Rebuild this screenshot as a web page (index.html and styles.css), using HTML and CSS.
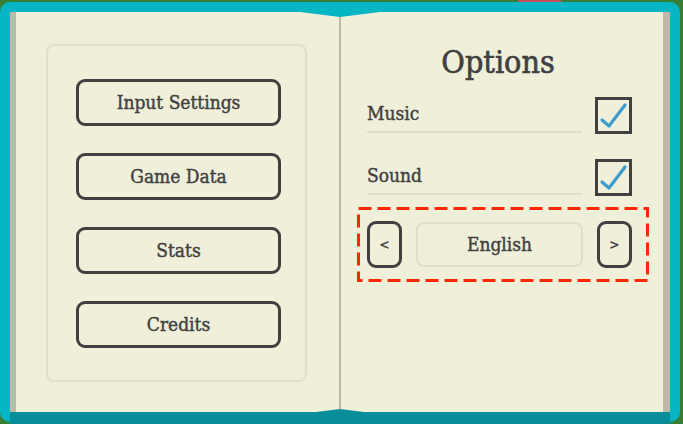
FILE: index.html
```html
<!DOCTYPE html>
<html lang="en">
<head>
    <meta charset="UTF-8">
    <title>Options</title>
    <link rel="stylesheet" href="styles.css">
</head>
<body>
    <div class="top-strip"><span class="ribbon"></span></div>
    <div class="book">
        <div class="pages">
            <!-- left page: main menu -->
            <section class="page page-left">
                <div class="menu-panel">
                    <button class="menu-btn">Input Settings</button>
                    <button class="menu-btn">Game Data</button>
                    <button class="menu-btn">Stats</button>
                    <button class="menu-btn">Credits</button>
                </div>
            </section>
            <div class="spine"></div>
            <!-- right page: options -->
            <section class="page page-right">
                <h1 class="title">Options</h1>
                <div class="option-row">
                    <span class="option-label">Music</span>
                    <span class="check">
                        <svg width="31" height="31" viewBox="0 0 31 31"><path d="M4 20 L11 26 L27 5" fill="none" stroke="#3d9ccf" stroke-width="3.2" stroke-linecap="round" stroke-linejoin="round"/></svg>
                    </span>
                </div>
                <div class="option-row">
                    <span class="option-label">Sound</span>
                    <span class="check">
                        <svg width="31" height="31" viewBox="0 0 31 31"><path d="M4 20 L11 26 L27 5" fill="none" stroke="#3d9ccf" stroke-width="3.2" stroke-linecap="round" stroke-linejoin="round"/></svg>
                    </span>
                </div>
                <div class="lang-box">
                    <svg class="dash" width="292" height="75"><rect x="1.5" y="1.5" width="289" height="72" fill="none" stroke="#ff2a00" stroke-width="3" stroke-dasharray="13 6"/></svg>
                    <button class="arrow-btn">&lt;</button>
                    <div class="lang-name">English</div>
                    <button class="arrow-btn">&gt;</button>
                </div>
            </section>
        </div>
        <svg class="dip dip-top" width="80" height="5"><polygon points="0,0 40,5 80,0" fill="#06b6c4"/></svg>
        <svg class="dip dip-bottom" width="80" height="5"><polygon points="0,5 40,0 80,5" fill="#078e9a"/></svg>
    </div>
</body>
</html>
```

FILE: styles.css
```css
/* page base */
body, html {
    margin: 0;
    padding: 0;
    height: 100%;
    overflow: hidden;
}
body {
    background: #3a7d34;
    font-family: "DejaVu Serif Condensed", "DejaVu Serif", serif;
    color: #404040;
    -webkit-text-stroke: 0.4px #404040; /* a bit heavier than regular */
}
.top-strip {
    height: 2px;
    display: flex;
}
.ribbon {
    margin-left: 518px;
    width: 43px;
    background: #c65060;
}
/* book cover */
.book {
    position: relative;
    width: 660px;
    height: 410px;
    padding: 10px 10px 0 10px;
    background: #06b6c4;
    border-radius: 10px;
}
.pages {
    display: flex;
    height: 400px;
    border-bottom: 12px solid #078e9a;
}
.page {
    background: #f0efda;
    box-sizing: border-box;
}
.page-left {
    width: 329px;
    border-left: 6px solid #bdb9a8;
    padding: 32px 32px 30px 30px;
}
.spine {
    width: 2px;
    background: #bdb9a8;
}
.page-right {
    width: 329px;
    border-right: 7px solid #bdb9a8;
    padding: 32px 30px 0 26px;
}
/* menu */
.menu-panel {
    height: 100%;
    box-sizing: border-box;
    border: 2px solid #e2dec8;
    border-radius: 8px;
    display: flex;
    flex-direction: column;
    align-items: center;
    gap: 27px;
    padding: 33px 0 0 4px;
}
.menu-btn {
    width: 205px;
    height: 47px;
    background: transparent;
    border: 3px solid #404040;
    border-radius: 9px;
    font-family: inherit;
    font-size: 19px;
    color: #404040;
    padding: 0 0 2px 0;
    -webkit-text-stroke: inherit;
}
/* options */
.title {
    margin: 0 0 17px 0;
    font-size: 32px;
    font-weight: normal;
    text-align: center;
    line-height: 36px;
    padding-right: 4px;
    -webkit-text-stroke: 0.6px #404040;
}
.option-row {
    display: flex;
    align-items: flex-end;
    gap: 13px;
    margin-bottom: 25px;
}
.option-label {
    width: 215px;
    font-size: 19px;
    line-height: 24px;
    padding-bottom: 6px;
    border-bottom: 2px solid #e2dec8;
    margin-bottom: 1px;
}
.check {
    width: 31px;
    height: 31px;
    border: 3px solid #404040;
    display: block;
}
.check svg {
    display: block;
}
/* language picker */
.lang-box {
    position: relative;
    width: 292px;
    height: 75px;
    box-sizing: border-box;
    margin: -14px 0 0 -10px;
    padding: 14px 16px 0 10px;
    display: flex;
    align-items: flex-start;
    gap: 14px;
}
.dash {
    position: absolute;
    top: 0;
    left: 0;
}
.arrow-btn {
    width: 35px;
    height: 47px;
    background: transparent;
    border: 3px solid #404040;
    border-radius: 9px;
    font-family: inherit;
    font-size: 13px;
    color: #404040;
    padding: 0;
    -webkit-text-stroke: 0.5px #404040;
}
.lang-name {
    width: 167px;
    height: 45px;
    box-sizing: border-box;
    margin-top: 1px;
    border: 2px solid #e2dec8;
    border-radius: 8px;
    display: flex;
    align-items: center;
    justify-content: center;
    font-size: 19px;
    padding-bottom: 2px;
}
/* centre dips of the pages */
.dip {
    position: absolute;
    left: 300px;
}
.dip-top {
    top: 10px;
}
.dip-bottom {
    top: 407px;
}
```
